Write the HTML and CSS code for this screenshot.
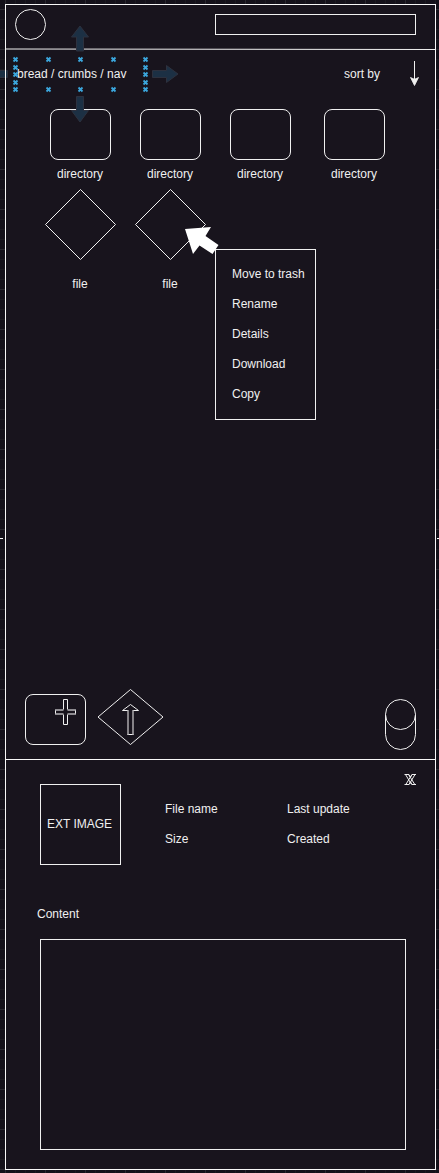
FILE: index.html
```
<!DOCTYPE html>
<html lang="en">
<head>
<meta charset="utf-8">
<title>File browser wireframe</title>
<link rel="stylesheet" href="styles.css">
</head>
<body>
<main class="frame">
  <header class="header">
    <span class="avatar"></span>
    <span class="search"></span>
  </header>
  <svg class="header-line" width="429" height="3" viewBox="0 0 429 3"><path d="M0 1 429 1.5"/></svg>

  <nav class="toolbar">
    <span class="crumbs">bread / crumbs / nav</span>
    <span class="sort">sort by</span>
    <svg class="sort-arrow" width="11" height="27" viewBox="0 0 11 27"><path d="M5.500 1V20"/><path class="solid" d="M5.500 25.500 1.500 17.500 5.500 19.300 9.500 17.500Z"/></svg>
  </nav>

  <section class="directories">
    <div class="directory"><span class="rounded"></span>directory</div>
    <div class="directory"><span class="rounded"></span>directory</div>
    <div class="directory"><span class="rounded"></span>directory</div>
    <div class="directory last"><span class="rounded"></span>directory</div>
  </section>

  <section class="files">
    <div class="file"><svg width="71" height="71" viewBox="0 0 71 71"><path d="M35.500.5 70.500 35.500 35.500 70.500.5 35.500Z"/></svg><span>file</span></div>
    <div class="file"><svg width="71" height="71" viewBox="0 0 71 71"><path d="M35.500.5 70.500 35.500 35.500 70.500.5 35.500Z"/></svg><span>file</span></div>
  </section>

  <section class="actions">
    <div class="rounded add"><svg width="22" height="27" viewBox="0 0 22 27"><path d="M8.500 10.500V.5h4v10M8.500 15.500v10h4v-10M.5 11v4M20.500 11v4"/><path class="soft" d="M0 11H8.500M0 15H8.500M12.500 11H21M12.500 15H21"/></svg></div>
    <svg class="upload" width="68" height="57" viewBox="0 0 68 57"><path d="M34.500 1.500 67 29 34.500 56.500 2 29Z"/><path d="M31.500 46.500H37.500M32 22.500H26.500L34.500 16.500 42.500 22.500H37"/><path class="soft" d="M32 22V47M37 22V47"/></svg>
    <svg class="toggle" width="31" height="51" viewBox="0 0 31 51"><circle cx="15.500" cy="15.500" r="15"/><path d="M.5 15.500V35.500a15 15 0 0 0 30 0V15.500"/></svg>
  </section>

  <section class="details">
    <svg class="close" width="13" height="13" viewBox="0 0 13 13"><path d="M.5 1.500H5L6.500 4.200 8 1.500H12M.5 11.500H5L6.500 8.800 8 11.500H12M1.500 1.500 7.500 11.500M4.500 1.500 10.800 11.500M11 1.500 5 11.500M8 1.500 1.800 11.500"/></svg>
    <div class="summary">
      <div class="preview">EXT IMAGE</div>
      <div class="facts">
        <span>File name</span><span>Last update</span>
        <span>Size</span><span>Created</span>
      </div>
    </div>
    <div class="content-label">Content</div>
    <div class="content-box"></div>
  </section>
</main>

<ul class="menu">
  <li>Move to trash</li>
  <li>Rename</li>
  <li>Details</li>
  <li>Download</li>
  <li>Copy</li>
</ul>

<svg class="overlay" width="439" height="1173" viewBox="0 0 439 1173">
  <defs><path id="h" d="M-2 -2 2 2M2 -2-2 2"/></defs>
  <g class="hint">
    <path d="M80 26 88.500 37H83.500V51H76.500V37H71.500Z"/>
    <path d="M80 122 88.500 110.500H83.500V96.500H76.500V110.500H71.500Z"/>
    <path d="M178 74 166.500 65.500V70.500H152.500V77.500H166.500V82.500Z"/>
    <path d="M-1 70.500H7.500V77.500H-1Z"/>
  </g>
  <path class="edge" d="M5.500 60V90"/>
  <g class="handles">
    <use href="#h" x="15.500" y="59.500"/><use href="#h" x="48.500" y="59.500"/><use href="#h" x="80.500" y="59.500"/><use href="#h" x="113.500" y="59.500"/><use href="#h" x="145.500" y="59.500"/>
    <use href="#h" x="15.500" y="67.500"/><use href="#h" x="15.500" y="74.500"/><use href="#h" x="15.500" y="82.500"/>
    <use href="#h" x="145.500" y="67.500"/><use href="#h" x="145.500" y="74.500"/><use href="#h" x="145.500" y="82.500"/>
    <use href="#h" x="15.500" y="89.500"/><use href="#h" x="48.500" y="89.500"/><use href="#h" x="80.500" y="89.500"/><use href="#h" x="113.500" y="89.500"/><use href="#h" x="145.500" y="89.500"/>
  </g>
  <path class="edge" d="M0 538.500H3M437 538.500H439"/>
  <path class="cursor" d="M185 229 211 227 205.500 236 218.500 245 212.500 254 199.500 245.500 193 254Z"/>
</svg>
</body>
</html>
```

FILE: styles.css
```
* { box-sizing: border-box; }

body {
  margin: 0;
  height: 1173px;
  overflow: hidden;
  display: flow-root;
  position: relative;
  background-color: #14111a;
  background-image:
    linear-gradient(to right, #2b2930 1px, transparent 1px),
    linear-gradient(to bottom, #2b2930 1px, transparent 1px),
    linear-gradient(to right, #1d1b21 1px, transparent 1px),
    linear-gradient(to bottom, #1d1b21 1px, transparent 1px);
  background-size: 40px 40px, 40px 40px, 10px 10px, 10px 10px;
  background-position: 5px 9px, 5px 9px, 5px 9px, 5px 9px;
  color: #f0f0f0;
  font: 12px/14px "Liberation Sans", Arial, sans-serif;
}

svg {
  display: block;
  flex: none;
  fill: none;
  stroke: #f0f0f0;
  stroke-width: 1;
  overflow: visible;
}

.frame {
  display: flex;
  flex-direction: column;
  width: 431px;
  height: 1166px;
  margin: 4px 0 0 5px;
  border: 1px solid #f8f8f8;
  background: #18141d;
}

.header {
  display: flex;
  justify-content: space-between;
  height: 43px;
  padding: 4px 19px 0 9px;
}

.avatar {
  width: 31px;
  height: 31px;
  border: 1px solid #f0f0f0;
  border-radius: 50%;
}

.search {
  width: 201px;
  height: 21px;
  margin-top: 5px;
  border: 1px solid #f0f0f0;
}

.toolbar {
  display: flex;
  align-items: flex-start;
  height: 58px;
  padding: 16px 15px 0 11px;
}

.sort { margin-left: auto; margin-right: 29px; }
.sort-arrow { margin-top: -7px; }
.solid { fill: #f0f0f0; stroke-width: .8; }
.soft { stroke: #b4b2b6; stroke-width: 1.4; }

.directories {
  display: flex;
  gap: 29px;
  height: 80px;
  padding-left: 44px;
}

.directory {
  width: 61px;
  padding-right: 1px;
  text-align: center;
}

.directory.last { margin-left: 4px; }

.rounded {
  display: block;
  width: 61px;
  height: 51px;
  border: 1px solid #f0f0f0;
  border-radius: 8px;
}

.directory .rounded { margin-bottom: 7px; }

.files {
  display: flex;
  gap: 19px;
  height: 500px;
  padding-left: 39px;
}

.file {
  display: flex;
  flex-direction: column;
  align-items: center;
  gap: 17px;
  width: 71px;
}

.file span { margin-right: 1px; }

.actions {
  display: flex;
  align-items: flex-start;
  height: 70px;
  padding: 5px 19px 0;
}

.add { padding: 4px 0 0 29px; }
.upload { margin: -6px 0 0 10px; }
.toggle { margin: 5px 0 0 auto; }

.details {
  flex: 1;
  border-top: 1px solid #f8f8f8;
}

.close { margin: 13px 0 0 398px; }

.summary {
  display: flex;
  margin: -2px 0 0 34px;
}

.preview {
  width: 81px;
  height: 81px;
  padding: 32px 0 0 6px;
  border: 1px solid #f0f0f0;
}

.facts {
  display: grid;
  grid-template-columns: 122px auto;
  grid-auto-rows: 30px;
  padding: 18px 0 0 44px;
}

.content-label { margin: 42px 0 0 31px; }

.content-box {
  width: 366px;
  height: 211px;
  margin: 18px 0 0 34px;
  border: 1px solid #f0f0f0;
}

.menu {
  position: absolute;
  left: 215px;
  top: 249px;
  width: 101px;
  height: 171px;
  margin: 0;
  padding: 17px 0 0 16px;
  border: 1px solid #f0f0f0;
  background: #18141d;
  list-style: none;
  white-space: nowrap;
}

.menu li { height: 30px; }

.overlay { position: absolute; left: 0; top: 0; }
.hint { fill: #1c3044; stroke: #2d313e; }
.handles { stroke: #3ba6dc; stroke-width: 1.800; }
.edge { stroke: #f8f8f8; }
.cursor { fill: #fff; stroke: none; }
```
